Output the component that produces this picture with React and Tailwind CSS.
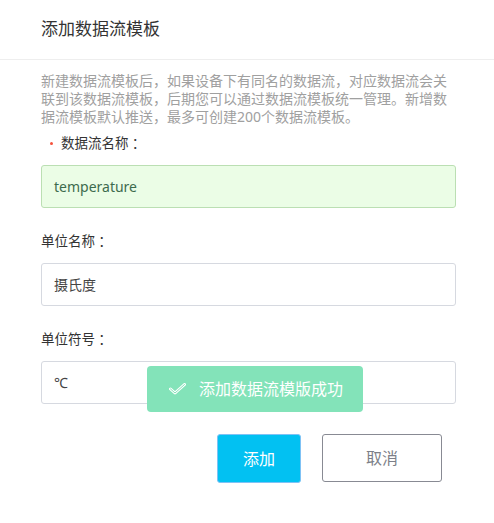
import React from 'react';

const FONT = { fontFamily: '"Noto Sans", "Noto Sans CJK SC", sans-serif' };
// 冒号居中显示
const COLON = { fontFamily: '"Noto Sans CJK TC", sans-serif' };

function Field({ label, required, value, success }) {
  return (
    <div className="flex flex-col">
      <div className="flex items-center h-[18px] text-[13.5px] text-[#333]">
        {required && <span className="w-[3px] h-[3px] rounded-full bg-[#f5523c] ml-[9px] mr-[8px]" />}
        <span>{label}</span>
        <span style={COLON}>：</span>
      </div>
      <div
        className={`mt-[13px] h-[43px] rounded-[3px] border flex items-center px-[12px] text-[14px] ${
          success
            ? 'bg-[#ebfde6] border-[#bbdfb3] text-[#3d6b4e]'
            : 'bg-white border-[#d6d9e0] text-[#444]'
        }`}
      >
        {value}
      </div>
    </div>
  );
}

export default function App() {
  return (
    <div className="relative w-[494px] h-[523px] bg-white" style={FONT}>
      {/* 标题 */}
      <div className="h-[60px] border-b border-[#eeeeee] flex items-center pl-[41px] pb-[2px]">
        <h2 className="text-[17px] text-[#333]">添加数据流模板</h2>
      </div>

      <div className="px-[41px] pr-[38px] pt-[12px]">
        <p className="text-[14px] leading-[18px] text-[#a0a0a0]">
          新建数据流模板后，如果设备下有同名的数据流，对应数据流会关联到该数据流模板，后期您可以通过数据流模板统一管理。新增数据流模板默认推送，最多可创建200个数据流模板。
        </p>

        <div className="mt-[8px] flex flex-col gap-[24px]">
          <Field label="数据流名称" required value="temperature" success />
          <Field label="单位名称" value="摄氏度" />
          <Field label="单位符号" value="℃" />
        </div>

        <div className="mt-[30px] flex justify-end gap-[21px] pr-[14px]">
          <button className="w-[84px] h-[49px] rounded-[3px] bg-[#02c1f2] border border-[#7fc2f5] text-white text-[16px]">
            添加
          </button>
          <button className="w-[120px] h-[48px] rounded-[3px] bg-white border border-[#888a93] text-[#7d7f88] text-[16px]">
            取消
          </button>
        </div>
      </div>

      {/* 成功提示 */}
      <div className="absolute left-[147px] top-[366px] w-[216px] h-[46px] rounded-[4px] bg-[#83e3b9] flex items-center pl-[22px] gap-[13px] text-white text-[16px]">
        <svg width="17" height="12" viewBox="0 0 17 12">
          <polyline points="1.5,6 6,10 15.5,1.5" fill="none" stroke="#fff" strokeWidth="3" strokeLinejoin="round" strokeLinecap="round" />
          <polyline points="1.5,6 6,10 15.5,1.5" fill="none" stroke="#83e3b9" strokeWidth="1" strokeLinejoin="round" strokeLinecap="round" />
        </svg>
        <span>添加数据流模版成功</span>
      </div>
    </div>
  );
}
